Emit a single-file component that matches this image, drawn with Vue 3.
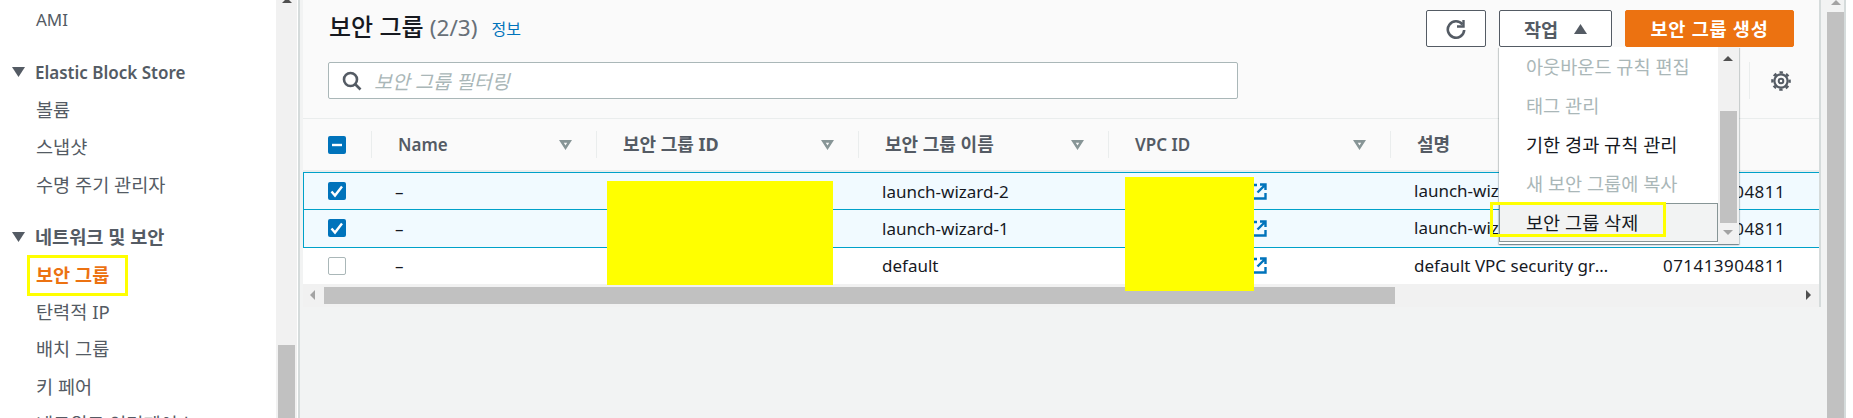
<template>
  <div class="page">
    <aside class="sidebar">
      <div class="nav">
        <section v-for="group in navGroups" :key="group.id" class="nav-group">
          <div v-if="group.title" class="nav-title" :class="{ ko: isKo(group.title) }">
            <svg class="caret" width="13" height="10" viewBox="0 0 13 10"><path d="M0 0h13L6.500 10z" fill="#545b64" /></svg>
            <span>{{ group.title }}</span>
          </div>
          <a
            v-for="link in group.links"
            :key="link"
            class="nav-link"
            :class="{ active: link === '보안 그룹', ko: isKo(link) }"
          >{{ link }}</a>
        </section>
      </div>
      <div class="nav-scroll">
        <span class="arrow-up"></span>
        <div class="nav-thumb"></div>
      </div>
    </aside>

    <main class="content">
      <div class="panel">
        <header class="panel-head">
          <div class="head-top">
            <h1 class="title">보안 그룹 <span class="count">(2/3)</span></h1>
            <a class="info">정보</a>
            <div class="actions">
              <button class="btn refresh">
                <svg width="22" height="22" viewBox="0 0 22 22" fill="none" stroke="#545b64" stroke-width="2.600">
                  <path d="M17.500 6.500A8.200 8.200 0 1 0 19.200 12" />
                  <path d="M18.500 2v6.500h-6.500" stroke-width="2.400" />
                </svg>
              </button>
              <button class="btn action">
                <span>작업</span>
                <svg width="13" height="10" viewBox="0 0 13 10"><path d="M0 10h13L6.500 0z" fill="#545b64" /></svg>
              </button>
              <button class="btn primary">보안 그룹 생성</button>
            </div>
          </div>
          <div class="head-search">
            <div class="search">
              <svg width="20" height="20" viewBox="0 0 20 20" fill="none" stroke="#545b64" stroke-width="2.600">
                <circle cx="8.500" cy="8.500" r="6.500" />
                <path d="M13 13l5.500 5.500" />
              </svg>
              <span>보안 그룹 필터링</span>
            </div>
            <div class="gear-wrap">
              <svg width="20" height="20" viewBox="0 0 20 20" fill="none" stroke="#545b64">
                <circle cx="10" cy="10" r="6.600" stroke-width="2.200" />
                <circle cx="10" cy="10" r="8.600" stroke-width="2.400" stroke-dasharray="3.400 3.350" stroke-dashoffset="1.700" />
                <circle cx="10" cy="10" r="2.300" stroke-width="2" />
              </svg>
            </div>
          </div>
        </header>

        <div class="table">
          <div class="row thead">
            <div class="cell check">
              <span class="box on">
                <svg width="18" height="18" viewBox="0 0 18 18"><path d="M4 9h10" stroke="#fff" stroke-width="2.400" /></svg>
              </span>
            </div>
            <div v-for="col in columns" :key="col.label" class="cell th" :class="{ ko: isKo(col.label) }">
              <span>{{ col.label }}</span>
              <svg v-if="col.filter" class="filter" width="13" height="10" viewBox="0 0 13 10">
                <path fill-rule="evenodd" d="M0 0h13L6.500 10zM4.800 2.800h3.400L6.500 5.600z" fill="#879596" />
              </svg>
            </div>
          </div>
          <div v-for="row in rows" :key="row.name" class="row tbody" :class="{ selected: row.selected }">
            <div class="cell check">
              <span class="box" :class="{ on: row.selected }">
                <svg v-if="row.selected" width="18" height="18" viewBox="0 0 18 18" fill="none"><path d="M3.500 9.500l3.500 4 7-9" stroke="#fff" stroke-width="2.400" /></svg>
              </span>
            </div>
            <div class="cell">–</div>
            <div class="cell"></div>
            <div class="cell">{{ row.name }}</div>
            <div class="cell vpc">
              <svg width="17" height="17" viewBox="0 0 17 17" fill="none" stroke="#0073bb" stroke-width="2.400">
                <path d="M7 2H1.500v13.500H15.500V10" />
                <path d="M10 1.500h5.500V7M15.500 1.500L7.500 9.500" />
              </svg>
            </div>
            <div class="cell ellipsis">{{ row.desc }}</div>
            <div class="cell owner">071413904811</div>
          </div>
        </div>

        <div class="h-scroll">
          <span class="arrow-left"></span>
          <div class="h-track"><div class="h-thumb"></div></div>
          <span class="arrow-right"></span>
        </div>
      </div>
    </main>

    <div class="page-scroll">
      <span class="arrow-up"></span>
      <div class="page-thumb"></div>
    </div>

    <div class="dropdown">
      <div class="menu-items">
        <div
          v-for="item in menuItems"
          :key="item.label"
          class="menu-item"
          :class="{ disabled: item.disabled, hover: item.hover }"
        >{{ item.label }}</div>
      </div>
      <div class="menu-scroll">
        <span class="arrow-up"></span>
        <div class="menu-thumb"></div>
        <span class="arrow-down"></span>
      </div>
    </div>

    <!-- 노란 표시 -->
    <div class="mark box-nav"></div>
    <div class="mark box-delete"></div>
    <div class="mark fill-id"></div>
    <div class="mark fill-vpc"></div>
  </div>
</template>

<script setup>
const isKo = (text) => /[가-힣]/.test(text)

const navGroups = [
  { id: 'images', links: ['AMI'] },
  { id: 'ebs', title: 'Elastic Block Store', links: ['볼륨', '스냅샷', '수명 주기 관리자'] },
  { id: 'net', title: '네트워크 및 보안', links: ['보안 그룹', '탄력적 IP', '배치 그룹', '키 페어', '네트워크 인터페이스'] }
]

const columns = [
  { label: 'Name', filter: true },
  { label: '보안 그룹 ID', filter: true },
  { label: '보안 그룹 이름', filter: true },
  { label: 'VPC ID', filter: true },
  { label: '설명', filter: false }
]

const rows = [
  { name: 'launch-wizard-2', desc: 'launch-wizard-2 created', selected: true },
  { name: 'launch-wizard-1', desc: 'launch-wizard-1 created', selected: true },
  { name: 'default', desc: 'default VPC security group', selected: false }
]

const menuItems = [
  { label: '아웃바운드 규칙 편집', disabled: true },
  { label: '태그 관리', disabled: true },
  { label: '기한 경과 규칙 관리' },
  { label: '새 보안 그룹에 복사', disabled: true },
  { label: '보안 그룹 삭제', hover: true }
]
</script>

<style>
html, body {
  margin: 0;
  overflow: hidden;
  background: #fff;
}
</style>

<style scoped>
.page {
  position: relative;
  display: flex;
  width: 1853px;
  height: 418px;
  overflow: hidden;
  background: #fff;
  color: #16191f;
  font-family: "Noto Sans", "Noto Sans CJK KR", sans-serif;
  font-size: 17px;
}

.ko {
  font-size: 18.600px;
}

/* 사이드바 */
.sidebar {
  display: flex;
  flex: none;
  width: 297px;
}

.nav {
  flex: 1;
  padding-top: 1px;
  overflow: hidden;
}

.nav-group {
  margin-bottom: 15px;
}

.nav-title,
.nav-link {
  display: flex;
  align-items: center;
  box-sizing: border-box;
  height: 37.400px;
  white-space: nowrap;
}

.nav-title.ko,
.nav-link.ko {
  padding-bottom: 2px;
}

.nav-title {
  gap: 10px;
  padding-left: 12px;
  color: #545b64;
  font-weight: 600;
}

.nav-title.ko {
  font-weight: 700;
}

.nav-title.ko .caret {
  margin-top: 2px;
}

.nav-link {
  padding-left: 36px;
  color: #545b64;
}

.nav-link.active {
  color: #ec7211;
  font-weight: 700;
}

.nav-scroll {
  position: relative;
  flex: none;
  width: 21px;
  background: #f1f1f1;
}

.nav-scroll .arrow-up {
  position: absolute;
  top: -2px;
  left: 6px;
}

.nav-thumb {
  position: absolute;
  top: 345px;
  left: 2px;
  width: 17px;
  height: 73px;
  background: #c1c1c1;
}

/* 본문 */
.content {
  flex: 1;
  padding-left: 3px;
  border-left: 2px solid #d5dbdb;
  margin-left: 1px;
  background: #f2f3f3;
  min-width: 0;
}

.panel {
  margin-right: 6px;
  border-right: 2px solid #d5dbdb;
  background: #fff;
}

.panel-head {
  height: 119px;
  padding: 10px 25px 0 25px;
  box-sizing: border-box;
  border-bottom: 1px solid #eaeded;
  background: #fafafa;
}

.head-top {
  display: flex;
  align-items: center;
  height: 37px;
}

.title {
  margin: -4px 0 0 1px;
  font-size: 24px;
  font-weight: 500;
  line-height: 37px;
}

.count {
  color: #687078;
  font-size: 22.500px;
  font-weight: 400;
}

.info {
  margin-top: -2px;
  margin-left: 14px;
  color: #0073bb;
  font-size: 16px;
}

.actions {
  display: flex;
  gap: 13px;
  margin-left: auto;
}

.btn {
  display: flex;
  align-items: center;
  justify-content: center;
  box-sizing: border-box;
  height: 37px;
  padding: 0;
  border: 1px solid #545b64;
  border-radius: 2px;
  background: #fff;
  color: #545b64;
  font: 700 18.600px "Noto Sans", "Noto Sans CJK KR", sans-serif;
}

.refresh {
  width: 60px;
}

.action {
  gap: 16px;
  width: 113px;
}

.primary {
  width: 169px;
  padding-bottom: 2px;
  border-color: #ec7211;
  background: #ec7211;
  color: #fff;
  letter-spacing: 0.7px;
}

.head-search {
  display: flex;
  align-items: center;
  height: 37px;
  margin-top: 15px;
}

.search {
  display: flex;
  align-items: center;
  gap: 12px;
  box-sizing: border-box;
  width: 910px;
  height: 37px;
  padding-left: 13px;
  border: 1px solid #aab7b8;
  border-radius: 2px;
  background: #fff;
  color: #aab7b8;
  font-size: 19.500px;
  font-style: italic;
}

.gear-wrap {
  display: flex;
  align-items: center;
  justify-content: flex-end;
  box-sizing: border-box;
  width: 45px;
  height: 37px;
  padding-right: 3px;
  margin-left: auto;
  border-left: 1px solid #eaeded;
}

/* 표 */
.table {
  overflow: hidden;
}

.row {
  display: grid;
  grid-template-columns: 68px 225px 262px 250px 282px 249px 180px;
}

.thead {
  height: 53px;
  border-bottom: 2px solid #eaeded;
  box-sizing: border-box;
  background: #fafafa;
  color: #545b64;
  font-weight: 600;
}

.tbody {
  box-sizing: border-box;
  height: 37.300px;
  color: #16191f;
}

.tbody.selected {
  border-top: 1px solid #00a1c9;
  box-shadow: inset 1px 0 #00a1c9;
  background: #f1faff;
}

.tbody.selected + .tbody:not(.selected) {
  border-top: 1px solid #00a1c9;
}

.cell {
  display: flex;
  align-items: center;
  min-width: 0;
  padding-left: 24px;
  white-space: nowrap;
}

.ellipsis {
  display: block;
  padding-right: 26px;
  overflow: hidden;
  line-height: 36px;
  text-overflow: ellipsis;
}

.owner {
  letter-spacing: 0.45px;
}

.check,
.tbody .check {
  padding-left: 25px;
}

.th {
  position: relative;
  justify-content: space-between;
  padding-left: 27px;
  padding-right: 24px;
  font-size: 17px;
}

.th.ko {
  font-size: 18px;
  font-weight: 700;
}

.th.ko span {
  margin-top: -3px;
}

.th::before {
  content: "";
  position: absolute;
  top: 12px;
  left: 0;
  width: 1px;
  height: 27px;
  background: #eaeded;
}

.vpc {
  padding-left: 142px;
}

.box {
  display: block;
  box-sizing: border-box;
  width: 18px;
  height: 18px;
  border: 1px solid #aab7b8;
  border-radius: 2px;
  background: #fff;
}

.box.on {
  border: 0;
  background: #0073bb;
}

.box svg {
  display: block;
}

/* 가로 스크롤 */
.h-scroll {
  display: flex;
  align-items: center;
  height: 23px;
  background: #f1f1f1;
}

.h-track {
  flex: 1;
  height: 17px;
  padding-left: 9px;
}

.h-thumb {
  width: 1071px;
  height: 17px;
  background: #c1c1c1;
}

.arrow-left {
  width: 0;
  height: 0;
  margin-left: 7px;
  border-top: 5px solid transparent;
  border-bottom: 5px solid transparent;
  border-right: 5px solid #a3a3a3;
}

.arrow-right {
  width: 0;
  height: 0;
  margin-right: 8px;
  border-top: 5px solid transparent;
  border-bottom: 5px solid transparent;
  border-left: 5px solid #505050;
}

.arrow-up,
.arrow-down {
  display: block;
  width: 0;
  height: 0;
  border-left: 5px solid transparent;
  border-right: 5px solid transparent;
}

.arrow-up {
  border-bottom: 5px solid #505050;
}

.arrow-down {
  border-top: 5px solid #a3a3a3;
}

/* 페이지 스크롤 */
.page-scroll {
  position: relative;
  flex: none;
  box-sizing: content-box;
  width: 17px;
  margin-right: 7px;
  border-right: 2px solid #d5dbdb;
  background: #f2f3f3;
}

.page-scroll .arrow-up {
  position: absolute;
  top: 0;
  left: 4px;
  border-bottom-color: #a3a3a3;
}

.page-thumb {
  position: absolute;
  top: 12px;
  left: 0;
  width: 17px;
  height: 406px;
  background: #c1c1c1;
}

/* 드롭다운 */
.dropdown {
  position: absolute;
  top: 47px;
  left: 1499px;
  display: flex;
  width: 240px;
  height: 197px;
  background: #fff;
  box-shadow: 0 1px 1px 0 rgba(0, 28, 36, 0.3), 1px 1px 1px 0 rgba(0, 28, 36, 0.15), -1px 1px 1px 0 rgba(0, 28, 36, 0.15);
}

.menu-items {
  flex: 1;
  font-size: 18.600px;
}

.menu-item {
  display: flex;
  align-items: center;
  box-sizing: border-box;
  height: 39px;
  padding-bottom: 2px;
  padding-left: 27px;
  white-space: nowrap;
}

.menu-item.disabled {
  color: #aab7b8;
}

.menu-item.hover {
  border: 1px solid #879596;
  padding-left: 26px;
  background: #f2f3f3;
}

.menu-scroll {
  position: relative;
  flex: none;
  width: 21px;
  background: #f1f1f1;
}

.menu-scroll .arrow-up {
  position: absolute;
  top: 9px;
  left: 5px;
}

.menu-scroll .arrow-down {
  position: absolute;
  bottom: 9px;
  left: 5px;
}

.menu-thumb {
  position: absolute;
  top: 64px;
  left: 2px;
  width: 17px;
  height: 112px;
  background: #c1c1c1;
}

/* 노란 표시 */
.mark {
  position: absolute;
  box-sizing: border-box;
}

.box-nav {
  top: 255px;
  left: 27px;
  width: 101px;
  height: 41px;
  border: 3px solid #ff0;
}

.box-delete {
  top: 202px;
  left: 1490px;
  width: 176px;
  height: 35px;
  border: 3px solid #ff0;
}

.fill-id {
  top: 181px;
  left: 607px;
  width: 226px;
  height: 104px;
  background: #ff0;
}

.fill-vpc {
  top: 177px;
  left: 1125px;
  width: 129px;
  height: 114px;
  background: #ff0;
}
</style>
